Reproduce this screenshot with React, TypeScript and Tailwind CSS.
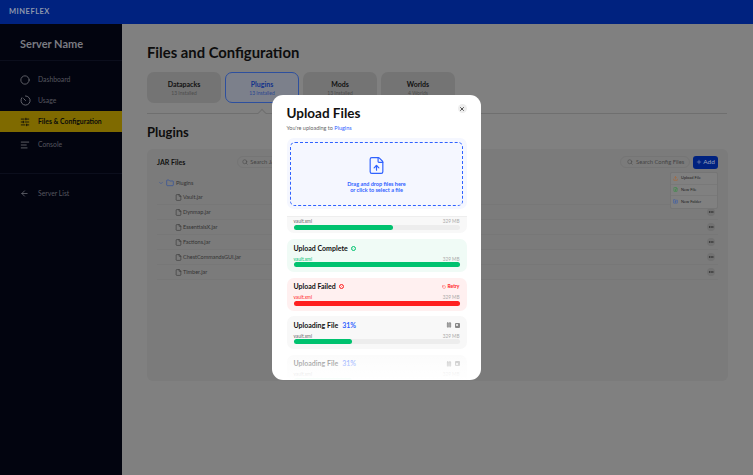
import type { ReactNode } from "react";
import { ChevronDown, Folder, File, Search, Plus, X, ArrowLeft, Pause, RotateCcw, SlidersHorizontal, AlignLeft, Circle, FileUp, Ellipsis, Check, Upload, FilePlus, FolderPlus } from "lucide-react";

function Nav({ icon, label, active }: { icon: ReactNode; label: string; active?: boolean }) {
  return (
    <div className={`flex h-[21px] items-center pl-[20px] text-[6.8px] ${active ? "bg-[#7f6a00] font-bold text-[#0a0a0a]" : "text-[#55565f]"}`}>
      <span className="flex w-[18px] shrink-0 items-center">{icon}</span>
      <span>{label}</span>
    </div>
  );
}

function Tab({ title, sub, active, notch }: { title: string; sub: string; active?: boolean; notch?: boolean }) {
  return (
    <div className={`relative flex h-[31px] w-[74px] flex-col items-center justify-center rounded-[7px] pt-[1px] ${active ? "border border-[#2d4f9e] bg-[#7c808b]" : "bg-[#747474]"}`}>
      <div className={`text-[7px] font-bold leading-[9px] ${active ? "text-[#14338a]" : "text-[#111]"}`}>{title}</div>
      <div className={`text-[5px] leading-[8px] ${active ? "text-[#2a4590]" : "text-[#4c4c4c]"}`}>{sub}</div>
      {notch && <span className="absolute bottom-[-14px] left-[33px] h-[6px] w-[6px] rotate-45 border-l border-t border-[#6f6f6f] bg-[#808080]" />}
    </div>
  );
}

const files = ["Vault.jar", "Dynmap.jar", "EssentialsX.jar", "Factions.jar", "ChestCommandsGUI.jar", "Timber.jar"];

function Bar({ pct, color = "bg-[#00c26f]" }: { pct: number; color?: string }) {
  return (
    <div className="h-[5px] rounded-full bg-[#ededed]">
      <div className={`h-full rounded-full ${color}`} style={{ width: `${pct}%` }} />
    </div>
  );
}

function Meta({ color = "text-[#666]" }: { color?: string }) {
  return (
    <div className="flex h-[7.5px] justify-between text-[4.7px] leading-[8px]">
      <span className={color}>vault.xml</span>
      <span className="text-[#aaa]">329 MB</span>
    </div>
  );
}

function Uploading() {
  return (
    <div className="h-[33px] shrink-0 rounded-[7px] bg-[#f8f8f8] px-[7px] pt-[4px]">
      <div className="mb-[1.5px] flex h-[10px] items-center">
        <span className="text-[7px] font-bold text-[#111]">Uploading File</span>
        <span className="ml-[4px] text-[7px] font-bold text-[#2f62ff]">31%</span>
        <div className="ml-auto flex items-center gap-[3px] text-[#888]">
          <Pause size={6} fill="currentColor" />
          <span className="flex h-[5px] w-[5px] items-center justify-center rounded-[1px] bg-[#888]"><span className="h-[2px] w-[2px] bg-[#ddd]" /></span>
        </div>
      </div>
      <Meta />
      <Bar pct={35} />
    </div>
  );
}

export default function App() {
  return (
    <div className="relative flex h-[475px] w-[753px] flex-col overflow-hidden bg-[#808080] font-['Lato',sans-serif]">
      <header className="flex h-[24px] shrink-0 items-center bg-[#00227f] pl-[9px] text-[7.5px] font-bold tracking-[0.5px] text-[#8e98ad]">MINEFLEX</header>
      <div className="flex min-h-0 flex-1">
        <aside className="w-[122px] shrink-0 bg-[#02040f]">
          <div className="flex h-[37px] items-center border-b border-[#0b0e1c] pl-[20px] pt-[4px] text-[11px] font-bold text-[#7a7b82]">Server Name</div>
          <div className="mt-[8px]">
            <Nav icon={<Circle size={10} className="text-[#6c6d75]" />} label="Dashboard" />
            <Nav
              icon={
                <svg width="11" height="11" viewBox="0 0 24 24" fill="none" stroke="#6c6d75" strokeWidth="2" strokeLinecap="round">
                  <path d="M12 2a10 10 0 1 1-8 4" />
                  <path d="M12 12 8 8" />
                </svg>
              }
              label="Usage"
            />
            <Nav active icon={<SlidersHorizontal size={10} />} label="Files & Configuration" />
            <div className="h-[2px]" />
            <Nav icon={<AlignLeft size={10} className="text-[#6c6d75]" />} label="Console" />
          </div>
          <div className="mt-[18px] border-t border-[#0b0e1c] pt-[9px]">
            <Nav icon={<ArrowLeft size={9} className="text-[#6c6d75]" />} label="Server List" />
          </div>
        </aside>
        <main className="min-w-0 flex-1 pl-[25px] pt-[19px]">
          <h1 className="text-[14.8px] font-bold leading-[18px] text-[#0d0d0d]">Files and Configuration</h1>
          <div className="mt-[11px] flex w-[580px] gap-[4px] border-b border-[#6f6f6f] pb-[10px]">
            <Tab title="Datapacks" sub="13 Installed" />
            <Tab active notch title="Plugins" sub="13 Installed" />
            <Tab title="Mods" sub="13 Installed" />
            <Tab title="Worlds" sub="4 Worlds" />
          </div>
          <h2 className="mt-[9px] text-[13px] font-bold leading-[18px] text-[#0d0d0d]">Plugins</h2>
          <section className="mt-[8px] h-[232px] w-[581px] rounded-[6px] bg-[#7b7b7b] px-[10px] pt-[6px]">
            <div className="flex h-[14px] items-center">
              <span className="text-[7px] font-bold text-[#111]">JAR Files</span>
              <div className="ml-[52px] flex h-[12px] w-[70px] items-center gap-[2px] whitespace-nowrap rounded-full border border-[#757575] pl-[4px] text-[5.8px] text-[#444]"><Search size={6} />Search JAR Files</div>
              <div className="ml-auto flex h-[12px] w-[70px] items-center gap-[3px] whitespace-nowrap rounded-full border border-[#757575] pl-[6px] text-[5.8px] text-[#444]"><Search size={6} />Search Config Files</div>
              <div className="ml-[3px] flex h-[13px] w-[25px] items-center justify-center gap-[1px] rounded-[3px] bg-[#00227f] text-[6.5px] text-[#99a3bd]"><Plus size={6} />Add</div>
            </div>
            <div className="mt-[7px] flex h-[14px] items-center gap-[2px] pl-[1px] text-[5.5px] text-[#333]">
              <ChevronDown size={6} className="text-[#2d4f9e]" />
              <Folder size={8} className="text-[#2d4f9e]" />
              Plugins
            </div>
            {files.map((f) => (
              <div key={f} className="flex h-[15px] items-center gap-[1px] border-b border-[#777] pl-[18px] text-[5.5px] text-[#333]">
                <File size={7} />
                {f}
                <span className="ml-auto mr-[3px] flex h-[8px] w-[8px] items-center justify-center rounded-full bg-[#727272]"><Ellipsis size={6} className="text-[#111]" /></span>
              </div>
            ))}
          </section>
        </main>
      </div>

      {/* add menu */}
      <div className="absolute left-[670px] top-[172px] w-[48px] rounded-[2px] border border-[#757575] bg-[#808080] text-[4px] text-[#222]">
        <div className="flex h-[11.5px] items-center gap-[3px] border-b border-[#797979] pl-[2px]"><Upload size={5} strokeWidth={3} className="text-[#a8683a]" />Upload File</div>
        <div className="flex h-[11.5px] items-center gap-[3px] border-b border-[#797979] pl-[2px]"><FilePlus size={5} strokeWidth={3} className="text-[#3f8c4a]" />New File</div>
        <div className="flex h-[11.5px] items-center gap-[3px] pl-[2px]"><FolderPlus size={5} strokeWidth={3} className="text-[#3d5da8]" />New Folder</div>
      </div>

      {/* modal */}
      <div className="absolute left-[272px] top-[95px] flex h-[285px] w-[209px] flex-col overflow-hidden rounded-[11px] bg-white pl-[14.5px] pr-[14.5px]">
        <div className="mt-[9px] flex items-start justify-between">
          <h3 className="text-[13.5px] font-bold leading-[18px] text-[#111]">Upload Files</h3>
          <span className="flex h-[9px] w-[9px] items-center justify-center rounded-full bg-[#eee]"><X size={6} strokeWidth={3} className="text-[#222]" /></span>
        </div>
        <div className="mt-[2px] text-[5.5px] leading-[8px] text-[#666]">You're uploading to <span className="text-[#2f62ff]">Plugins</span></div>
        <div className="mt-[6px] shrink-0 rounded-[7px] bg-[#f5f7ff] p-[3.5px]">
          <div className="flex h-[64px] flex-col items-center rounded-[5px] border border-dashed border-[#2f62ff] pt-[13px] text-center text-[5.5px] font-bold leading-[6px] text-[#2f62ff]">
            <FileUp size={19} strokeWidth={1.5} className="mb-[6px] shrink-0" />
            <div>Drag and drop files here</div>
            <div>or click to select a file</div>
          </div>
        </div>
        <div className="relative mt-[7px] flex min-h-0 flex-1 flex-col gap-[5.5px] overflow-hidden">
          <div className="mb-[0.5px] h-[17px] shrink-0 rounded-b-[7px] border-t border-[#eee] bg-[#f8f8f8] px-[7px]">
            <Meta />
            <Bar pct={60} />
          </div>
          <div className="h-[33px] shrink-0 rounded-[7px] bg-[#f0fbf6] px-[7px] pt-[4px]">
            <div className="mb-[1.5px] flex h-[10px] items-center gap-[3px] text-[7px] font-bold text-[#111]">Upload Complete <span className="flex h-[5px] w-[5px] items-center justify-center rounded-full border border-[#00c26f]"><Check size={3} className="text-[#00c26f]" /></span></div>
            <Meta color="text-[#00c26f]" />
            <Bar pct={100} />
          </div>
          <div className="h-[33px] shrink-0 rounded-[7px] bg-[#fff0f0] px-[7px] pt-[4px]">
            <div className="mb-[1.5px] flex h-[10px] items-center gap-[3px] text-[7px] font-bold text-[#111]">Upload Failed <span className="flex h-[5px] w-[5px] items-center justify-center rounded-full border border-[#ff2020]"><X size={3} className="text-[#ff2020]" /></span>
              <span className="ml-auto flex items-center gap-[1px] text-[5px] font-bold text-[#ff2020]"><RotateCcw size={4} />Retry</span>
            </div>
            <Meta color="text-[#ff2020]" />
            <Bar pct={100} color="bg-[#ff1f1f]" />
          </div>
          <Uploading />
          <Uploading />
          <div className="absolute inset-x-0 bottom-0 h-[26px] bg-gradient-to-b from-[#ffffff70] to-white" />
        </div>
      </div>
    </div>
  );
}
